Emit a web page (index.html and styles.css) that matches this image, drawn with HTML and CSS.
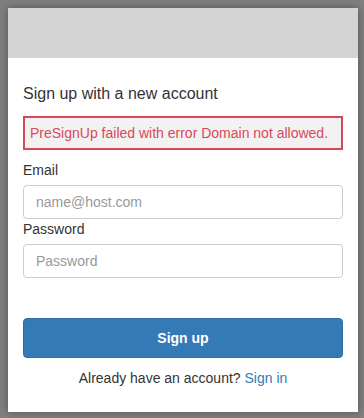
FILE: index.html
```html
<!DOCTYPE html>
<html>
<head>
<meta charset="utf-8">
<link rel="stylesheet" href="styles.css">
</head>
<body>
<div class="card">
  <div class="banner"></div>
  <div class="content">
    <h1 class="title">Sign up with a new account</h1>
    <div class="error">PreSignUp failed with error Domain not allowed.</div>
    <label class="label">Email</label>
    <input class="input" type="text" placeholder="name@host.com">
    <label class="label">Password</label>
    <input class="input" type="password" placeholder="Password">
    <button class="btn">Sign up</button>
    <p class="footer">Already have an account? <a class="link" href="#">Sign in</a></p>
  </div>
</div>
</body>
</html>
```

FILE: styles.css
```css
html, body {
  height: 100%;
}
body {
  margin: 0;
  padding: 8px 6px 6px 8px;
  box-sizing: border-box;
  background: #7f7f7f;
  font-family: "Liberation Sans", Arial, sans-serif;
  font-size: 14px;
  line-height: 20px;
  color: #333;
}
.card {
  width: 350px;
  height: 404px;
  background: #fff;
  box-shadow: 0 0 8px rgba(0, 0, 0, 0.35);
  display: flex;
  flex-direction: column;
}
.banner {
  height: 50px;
  background: #d4d4d4;
}
.content {
  padding: 26px 15px 0 15px;
  display: flex;
  flex-direction: column;
}
.title {
  margin: 0;
  font-size: 16px;
  font-weight: normal;
  line-height: 20px;
  color: #333;
}
.error {
  margin-top: 12px;
  border: 2px solid #d9485a;
  background: #f2f2f2;
  color: #d9485a;
  padding: 5px;
  height: 20px;
}
.label {
  display: block;
  margin-bottom: 5px;
}
.error + .label {
  margin-top: 10px;
}
.input {
  box-sizing: border-box;
  width: 100%;
  height: 34px;
  margin: 0;
  padding: 6px 12px;
  border: 1px solid #ccc;
  border-radius: 4px;
  font-family: "Liberation Sans", Arial, sans-serif;
  font-size: 14px;
  color: #555;
  background: #fff;
}
.input::placeholder {
  color: #999;
}
.btn {
  margin-top: 40px;
  height: 40px;
  width: 100%;
  border: 1px solid #2e6da4;
  border-radius: 4px;
  background: #337ab7;
  color: #fff;
  font-family: "Liberation Sans", Arial, sans-serif;
  font-size: 14px;
  font-weight: bold;
}
.footer {
  margin: 10px 0 0 0;
  text-align: center;
}
.link {
  color: #337ab7;
  text-decoration: none;
}
```
